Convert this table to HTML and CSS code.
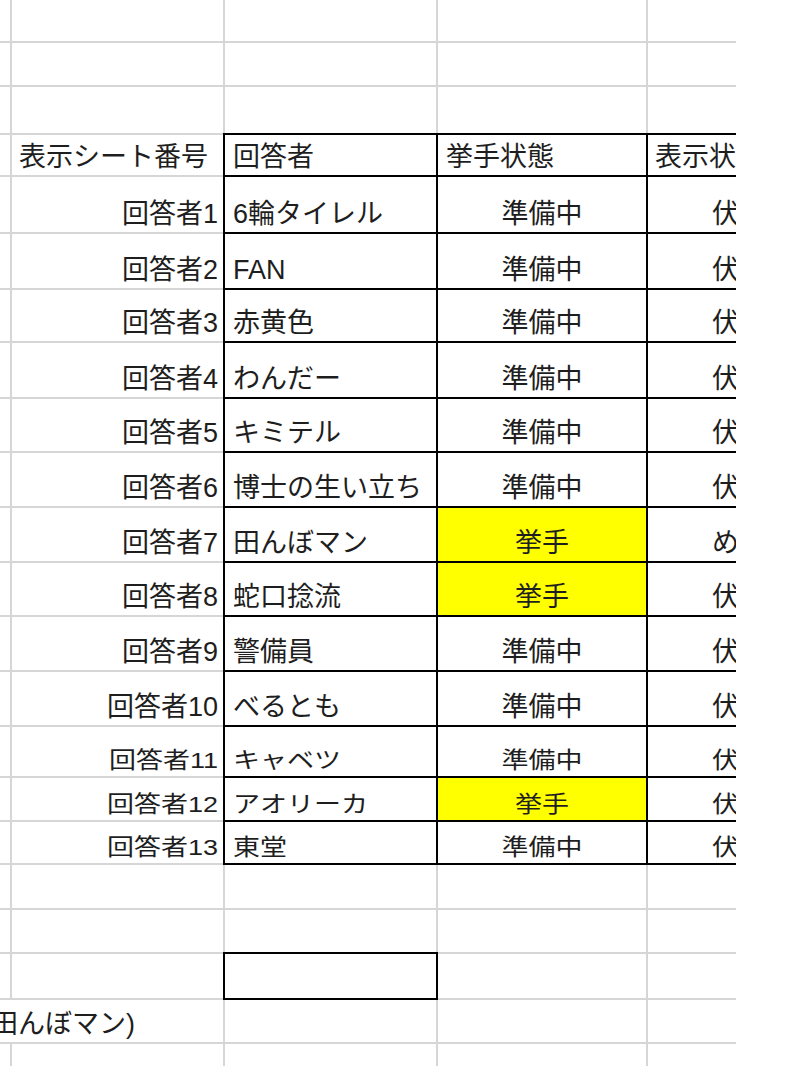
FILE: index.html
```html
<!DOCTYPE html>
<html lang="ja">
<head>
<meta charset="utf-8">
<title>Sheet</title>
<link rel="stylesheet" href="styles.css">
</head>
<body>
<div class="sheet">
  <div class="c"></div><div class="c"></div><div class="c"></div><div class="c"></div><div class="c"></div>
  <div class="c"></div><div class="c"></div><div class="c"></div><div class="c"></div><div class="c"></div>
  <div class="c"></div><div class="c"></div><div class="c"></div><div class="c"></div><div class="c"></div>

  <div class="c"></div><div class="c hl">表示シート番号</div><div class="c b nm">回答者</div><div class="c b nm">挙手状態</div><div class="c b hd4">表示状態</div>

  <div class="c"></div><div class="c num">回答者1</div><div class="c b nm">6輪タイレル</div><div class="c b st">準備中</div><div class="c b v">伏</div>
  <div class="c"></div><div class="c num">回答者2</div><div class="c b nm">FAN</div><div class="c b st">準備中</div><div class="c b v">伏</div>
  <div class="c"></div><div class="c num">回答者3</div><div class="c b nm">赤黄色</div><div class="c b st">準備中</div><div class="c b v">伏</div>
  <div class="c"></div><div class="c num">回答者4</div><div class="c b nm">わんだー</div><div class="c b st">準備中</div><div class="c b v">伏</div>
  <div class="c"></div><div class="c num">回答者5</div><div class="c b nm">キミテル</div><div class="c b st">準備中</div><div class="c b v">伏</div>
  <div class="c"></div><div class="c num">回答者6</div><div class="c b nm">博士の生い立ち</div><div class="c b st">準備中</div><div class="c b v">伏</div>
  <div class="c"></div><div class="c num">回答者7</div><div class="c b nm">田んぼマン</div><div class="c b st y">挙手</div><div class="c b v">め</div>
  <div class="c"></div><div class="c num">回答者8</div><div class="c b nm">蛇口捻流</div><div class="c b st y">挙手</div><div class="c b v">伏</div>
  <div class="c"></div><div class="c num">回答者9</div><div class="c b nm">警備員</div><div class="c b st">準備中</div><div class="c b v">伏</div>
  <div class="c"></div><div class="c num">回答者10</div><div class="c b nm">べるとも</div><div class="c b st">準備中</div><div class="c b v">伏</div>
  <div class="c"></div><div class="c num sq"><span>回答者11</span></div><div class="c b nm sq"><span>キャベツ</span></div><div class="c b st sq"><span>準備中</span></div><div class="c b v sq"><span>伏</span></div>
  <div class="c"></div><div class="c num sq"><span>回答者12</span></div><div class="c b nm sq"><span>アオリーカ</span></div><div class="c b st y sq"><span>挙手</span></div><div class="c b v sq"><span>伏</span></div>
  <div class="c"></div><div class="c num sq"><span>回答者13</span></div><div class="c b nm sq"><span>東堂</span></div><div class="c b st sq"><span>準備中</span></div><div class="c b v sq"><span>伏</span></div>

  <div class="c"></div><div class="c"></div><div class="c"></div><div class="c"></div><div class="c"></div>
  <div class="c"></div><div class="c"></div><div class="c"></div><div class="c"></div><div class="c"></div>
  <div class="c"></div><div class="c"></div><div class="c b"></div><div class="c"></div><div class="c"></div>
  <div class="c span2"><span class="spill">田んぼマン)</span></div><div class="c"></div><div class="c"></div><div class="c"></div>
  <div class="c"></div><div class="c"></div><div class="c"></div><div class="c"></div><div class="c"></div>
</div>
</body>
</html>
```

FILE: styles.css
```css
html, body {
  margin: 0;
  padding: 0;
  background: #ffffff;
}

.sheet {
  width: 736px;
  height: 1066px;
  overflow: hidden;
  display: grid;
  grid-template-columns: 10px 211px 211px 208px 88px;
  grid-template-rows: 41px 42px 46px 40px 55px 54px 51px 54px 52px 53px 53px 52px 53px 53px 49px 42px 41px 43px 42px 44px 42px 30px;
  gap: 2px;
  background: #d6d6d6;
  font-family: "Liberation Sans", "Noto Sans CJK JP", sans-serif;
  font-size: 27px;
  line-height: 1.2;
  color: #1e1e1e;
}

.c {
  background: #ffffff;
  display: flex;
  align-items: flex-end;
  padding-bottom: 2px;
  white-space: nowrap;
  overflow: hidden;
  min-width: 0;
}

.b {
  box-shadow: 0 0 0 2px #000000;
}

.hl {
  padding-left: 7px;
}

.nm {
  padding-left: 8px;
}

.num {
  justify-content: flex-end;
  padding-right: 5px;
}

.st {
  justify-content: center;
}

.y {
  background: #ffff00;
}

.hd4 {
  padding-left: 7px;
}

.v {
  padding-left: 64px;
}

.sq span {
  display: inline-block;
  transform: scaleY(0.84);
  transform-origin: 50% 90%;
}

.span2 {
  grid-column: span 2;
}

.spill {
  margin-left: -9px;
}
```
